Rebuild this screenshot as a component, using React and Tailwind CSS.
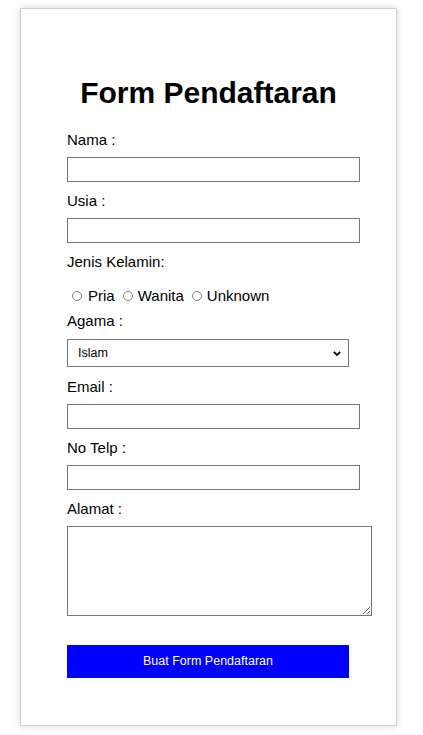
import React from 'react';

const Label = ({ children, className = '' }) => (
  <label className={`block text-[15px] leading-[16px] text-black ${className}`}>{children}</label>
);

const TextInput = ({ type = 'text' }) => (
  <input
    type={type}
    className="block mt-[9px] w-[293px] h-[25px] border border-[#767676] bg-white outline-none"
  />
);

const Radio = ({ label, first }) => (
  <span className={`flex items-center ${first ? '' : 'ml-[3px]'}`}>
    <span
      className={`block ml-[5px] w-[10px] h-[10px] rounded-full border border-[#858585] bg-white ${first ? 'mr-[6px]' : 'mr-[5px]'}`}
    />
    <span>{label}</span>
  </span>
);

export default function App() {
  return (
    <div
      className="min-h-screen bg-white pt-[8px] pl-[20px]"
      style={{ fontFamily: '"Liberation Sans", Arial, sans-serif' }}
    >
      <div className="w-[377px] h-[718px] border border-[#d0d0d0] shadow-[0_0_7px_rgba(0,0,0,0.16)] px-[46px] pt-[67px] bg-white">
        <h1 className="text-[30px] leading-[34px] font-bold text-center text-black">Form Pendaftaran</h1>

        <Label className="mt-[22px]">Nama :</Label>
        <TextInput />

        <Label className="mt-[11px]">Usia :</Label>
        <TextInput />

        <Label className="mt-[11px]">Jenis Kelamin:</Label>
        <div className="flex items-center mt-[18px] h-[16px] text-[15px] leading-[16px] text-black">
          <Radio label="Pria" first />
          <Radio label="Wanita" />
          <Radio label="Unknown" />
        </div>

        <Label className="mt-[9px]">Agama :</Label>
        <div className="relative mt-[10px] w-[282px] h-[28px]">
          <select className="block appearance-none w-full h-full border border-[#767676] bg-white pl-[10px] text-[12.5px] text-black outline-none">
            <option>Islam</option>
            <option>Kristen</option>
            <option>Katolik</option>
            <option>Hindu</option>
            <option>Buddha</option>
          </select>
          <svg
            className="absolute right-[8px] top-[12px] pointer-events-none"
            width="8"
            height="5"
            viewBox="0 0 8 5"
          >
            <path d="M0.8 0.8 L4 4 L7.2 0.8" fill="none" stroke="#000" strokeWidth="1.8" />
          </svg>
        </div>

        <Label className="mt-[12px]">Email :</Label>
        <TextInput type="email" />

        <Label className="mt-[11px]">No Telp :</Label>
        <TextInput type="tel" />

        <Label className="mt-[11px]">Alamat :</Label>
        <textarea className="block mt-[9px] w-[305px] h-[90px] border border-[#767676] bg-white outline-none" />

        <button className="block mt-[29px] w-[282px] h-[33px] bg-[#0000ff] text-white text-[12.5px]">
          Buat Form Pendaftaran
        </button>
      </div>
    </div>
  );
}
